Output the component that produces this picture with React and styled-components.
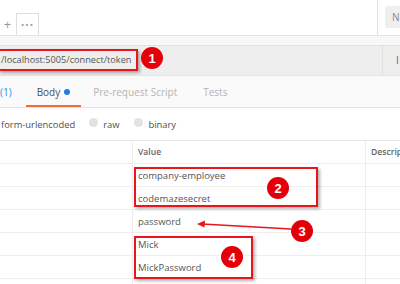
import styled, { createGlobalStyle } from "styled-components";

const Global = createGlobalStyle`
  html, body { margin: 0; padding: 0; background: #fff; }
  body { font-family: "Open Sans", "Liberation Sans", sans-serif; }
`;

const Page = styled.div`
  position: relative;
  width: 400px;
  height: 284px;
  overflow: hidden;
  background: #fff;
  color: #505050;
  font-size: 9.4px;
`;

const TopBar = styled.div`
  height: 35px;
  display: flex;
  border-bottom: 1px solid #e3e3e3;
`;

const TabBox = styled.div`
  width: ${p => p.w}px;
  height: 22px;
  margin-top: 13px;
  box-sizing: border-box;
  border-right: 1px solid #dedede;
  border-top: ${p => (p.top ? "1px solid #dedede" : "none")};
  display: flex;
  align-items: center;
  justify-content: center;
  color: #9a9a9a;
  font-size: ${p => p.fs}px;
  letter-spacing: 1px;
`;

const Spacer = styled.div`
  flex: 1;
`;

const RightSide = styled.div`
  flex: none;
  width: ${p => p.w}px;
  display: flex;
  overflow: hidden;
  border-left: 1px solid #e0e0e0;
`;

const NewButton = styled.div`
  flex: none;
  margin: 6px 0 0 7px;
  width: 30px;
  height: 22px;
  background: #efefef;
  border-radius: 3px 0 0 3px;
  color: #888;
  padding-left: 7px;
  line-height: 22px;
  font-size: 10px;
`;

const Band = styled.div`
  height: 9px;
  background: #f7f7f7;
`;

const UrlBar = styled.div`
  height: 29px;
  display: flex;
  background: #eeeeee;
  border-top: 1px solid #e2e2e2;
  border-bottom: 1px solid #e4e4e4;
`;

const UrlInput = styled.div`
  width: 138px;
  height: 22px;
  margin-top: 3px;
  line-height: 22px;
  padding-left: 1px;
  font-size: 9.2px;
  color: #555;
  white-space: nowrap;
`;

const UrlRight = styled.div`
  padding-left: 13px;
  line-height: 29px;
  color: #666;
  font-size: 10px;
`;

const TabBar = styled.div`
  height: 31px;
  display: flex;
  background: #fafafa;
  border-bottom: 1px solid #e6e6e6;
  font-size: 10px;
`;

const Tab = styled.div`
  position: relative;
  display: flex;
  align-items: center;
  gap: 4px;
  padding: 0 ${p => p.px}px;
  margin-right: ${p => p.mr}px;
  color: ${p => (p.active ? "#505050" : p.blue ? "#2d8ee6" : "#b5b5b5")};
  white-space: nowrap;
  &::after {
    content: "";
    display: ${p => (p.active ? "block" : "none")};
    position: absolute;
    left: 0;
    right: 0;
    bottom: 0;
    height: 2px;
    background: #f26b3a;
  }
`;

const Dot = styled.span`
  width: 6px;
  height: 6px;
  border-radius: 50%;
  background: #1e7fe0;
`;

const RadioRow = styled.div`
  height: 32px;
  display: flex;
  align-items: center;
  padding-left: 1px;
  border-bottom: 1px solid #e6e6e6;
`;

const RadioItem = styled.div`
  display: flex;
  align-items: center;
  gap: 5px;
  margin-right: ${p => p.mr}px;
`;

const Radio = styled.span`
  width: 9px;
  height: 9px;
  border-radius: 50%;
  background: #e2e2e2;
  margin-top: -3px;
`;

const Row = styled.div`
  height: 22px;
  display: grid;
  grid-template-columns: 133px 233px 34px;
  border-bottom: 1px solid #eeeeee;
`;

const Cell = styled.div`
  display: flex;
  align-items: center;
  padding-left: 5px;
  border-right: ${p => (p.last ? "none" : "1px solid #ededed")};
  font-size: ${p => (p.head ? 8.6 : 9.5)}px;
  font-weight: ${p => (p.head ? 600 : 400)};
  color: ${p => (p.head ? "#666" : "#555")};
  white-space: nowrap;
  overflow: hidden;
`;

const RedBox = styled.div`
  position: absolute;
  left: ${p => p.x}px;
  top: ${p => p.y}px;
  width: ${p => p.w}px;
  height: ${p => p.h}px;
  box-sizing: border-box;
  border: 2px solid #e8161c;
  box-shadow: 2px 2px 3px rgba(0, 0, 0, 0.3);
`;

const Badge = styled.div`
  position: absolute;
  left: ${p => p.x - 11}px;
  top: ${p => p.y - 11}px;
  width: 22px;
  height: 22px;
  border-radius: 50%;
  background: #e50009;
  color: #fff;
  font-family: "Liberation Sans", sans-serif;
  font-weight: 700;
  font-size: 13px;
  display: flex;
  align-items: center;
  justify-content: center;
`;

const Overlay = styled.svg`
  position: absolute;
  left: 0;
  top: 0;
  pointer-events: none;
`;

const rows = [
  "company-employee",
  "codemazesecret",
  "password",
  "Mick",
  "MickPassword",
];

export default function App() {
  return (
    <Page>
      <Global />
      <TopBar>
        <TabBox w={17} fs={13}>+</TabBox>
        <TabBox w={22} fs={9} top>•••</TabBox>
        <Spacer />
        <RightSide w={22}>
          <NewButton>N</NewButton>
        </RightSide>
      </TopBar>
      <Band />
      <UrlBar>
        <UrlInput>/localhost:5005/connect/token</UrlInput>
        <Spacer />
        <RightSide w={17}>
          <UrlRight>I</UrlRight>
        </RightSide>
      </UrlBar>
      <TabBar>
        <Tab blue px={0} mr={14}>(1)</Tab>
        <Tab active px={11} mr={12}>Body <Dot /></Tab>
        <Tab px={0} mr={26}>Pre-request Script</Tab>
        <Tab px={0} mr={0}>Tests</Tab>
      </TabBar>
      <RadioRow>
        <RadioItem mr={14}>form-urlencoded</RadioItem>
        <RadioItem mr={15}><Radio />raw</RadioItem>
        <RadioItem mr={0}><Radio />binary</RadioItem>
      </RadioRow>
      <Row>
        <Cell head />
        <Cell head>Value</Cell>
        <Cell head last>Descrip</Cell>
      </Row>
      {rows.map(v => (
        <Row key={v}>
          <Cell />
          <Cell>{v}</Cell>
          <Cell last />
        </Row>
      ))}
      <Row>
        <Cell />
        <Cell />
        <Cell last />
      </Row>

      <RedBox x={-2} y={49} w={140} h={22} />
      <Badge x={152} y={58}>1</Badge>
      <RedBox x={134} y={167} w={184} h={40} />
      <Badge x={278} y={188}>2</Badge>
      <Overlay width="400" height="284">
        <line x1="291" y1="229" x2="202" y2="224" stroke="#e8161c" strokeWidth="1.5" />
        <polygon points="197,224 205,220.5 204.5,227.5" fill="#e8161c" />
      </Overlay>
      <Badge x={302} y={231}>3</Badge>
      <RedBox x={134} y={236} w={119} h={43} />
      <Badge x={232} y={257}>4</Badge>
    </Page>
  );
}
